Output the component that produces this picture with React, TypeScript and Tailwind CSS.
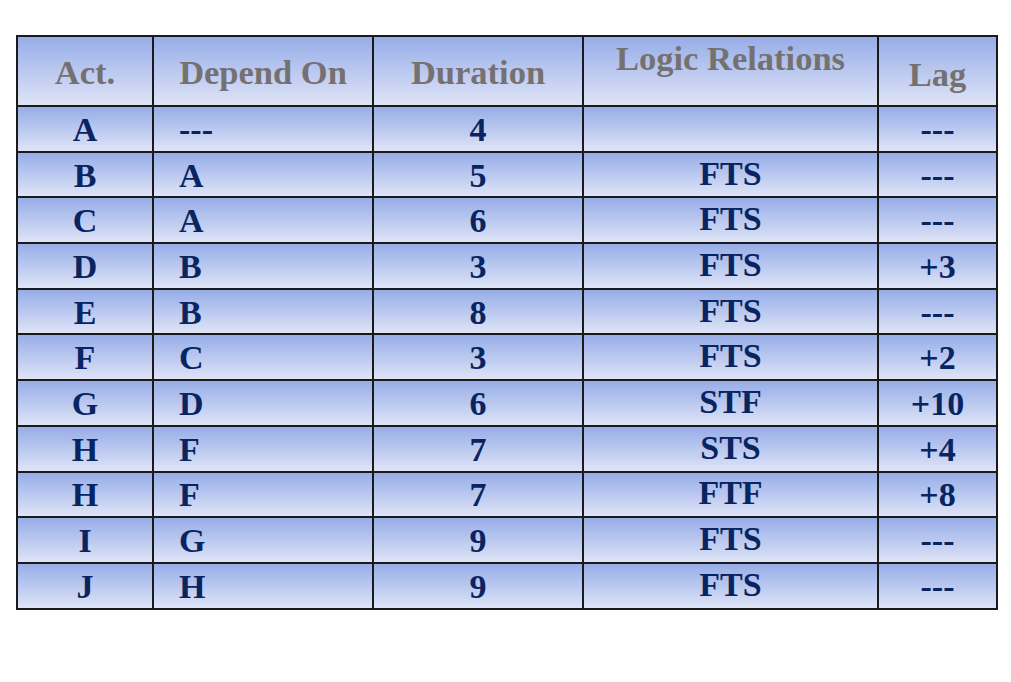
const rows: [string, string, string, string, string][] = [
  ["A", "---", "4", "", "---"],
  ["B", "A", "5", "FTS", "---"],
  ["C", "A", "6", "FTS", "---"],
  ["D", "B", "3", "FTS", "+3"],
  ["E", "B", "8", "FTS", "---"],
  ["F", "C", "3", "FTS", "+2"],
  ["G", "D", "6", "STF", "+10"],
  ["H", "F", "7", "STS", "+4"],
  ["H", "F", "7", "FTF", "+8"],
  ["I", "G", "9", "FTS", "---"],
  ["J", "H", "9", "FTS", "---"],
];

const cell =
  "border-2 border-[#1a1a1a] bg-gradient-to-b from-[#97ade8] to-[#dfe4f6] p-0";

export default function App() {
  return (
    <div className="h-[682px] w-[1011px] bg-white pl-[16px] pt-[35px] font-['Liberation_Serif',serif] font-bold">
      <table className="w-[980px] table-fixed border-collapse">
        <colgroup>
          <col className="w-[136px]" />
          <col className="w-[220px]" />
          <col className="w-[210px]" />
          <col className="w-[295px]" />
          <col className="w-[119px]" />
        </colgroup>
        <thead>
          <tr className="h-[70px] text-[34.5px] leading-none text-[#767171]">
            <th className={`${cell} pt-[2px] text-center`}>Act.</th>
            <th className={`${cell} pt-[2px] text-center`}>Depend On</th>
            <th className={`${cell} pt-[2px] text-center`}>Duration</th>
            <th className={`${cell} pb-[26px] text-center`}>Logic Relations</th>
            <th className={`${cell} pt-[6px] text-center`}>Lag</th>
          </tr>
        </thead>
        <tbody>
          {rows.map((r, i) => (
            <tr key={i} className="h-[45.7px] text-[34px] leading-none text-[#082561]">
              <td className={`${cell} pt-[2px] text-center`}>{r[0]}</td>
              <td className={`${cell} pl-[25px] pt-[2px] text-left`}>{r[1]}</td>
              <td className={`${cell} pt-[2px] text-center`}>{r[2]}</td>
              <td className={`${cell} pb-[2px] text-center`}>{r[3]}</td>
              <td className={`${cell} pt-[2px] text-center`}>{r[4]}</td>
            </tr>
          ))}
        </tbody>
      </table>
    </div>
  );
}
